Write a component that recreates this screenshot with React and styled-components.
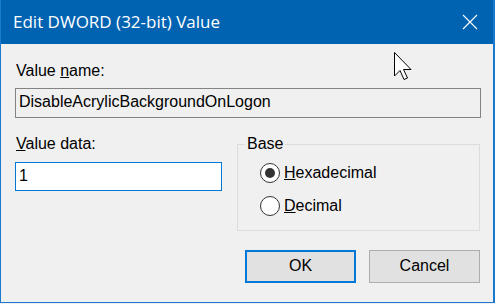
import React from "react";
import styled, { createGlobalStyle } from "styled-components";

const Global = createGlobalStyle`
  html, body { margin: 0; padding: 0; background: #f0f0f0; }
  body { font-family: "Liberation Sans", Arial, sans-serif; }
  * { box-sizing: border-box; }
`;

const Window = styled.div`
  position: relative;
  width: 495px;
  height: 303px;
  background: #f0f0f0;
  border-left: 1px solid #1a78cf;
  border-right: 2px solid #1a78cf;
  border-bottom: 1px solid #1a78cf;
  display: flex;
  flex-direction: column;
  overflow: hidden;
`;

const TitleBar = styled.div`
  height: 44px;
  flex: none;
  background: #0063b1;
  display: flex;
  align-items: center;
  justify-content: space-between;
  padding-left: 12px;
`;

const Title = styled.div`
  color: #fff;
  font-family: "Open Sans", "Noto Sans", sans-serif;
  font-size: 17px;
  line-height: 20px;
`;

const CloseButton = styled.div`
  width: 46px;
  height: 44px;
  display: flex;
  align-items: center;
  justify-content: center;
`;

const Body = styled.div`
  flex: 1;
  display: flex;
  flex-direction: column;
  padding: 18px 12px 0 14px;
  font-size: 16px;
  line-height: 18px;
  color: #000;
`;

const Label = styled.div`
  padding-left: 1px;
  height: 18px;
`;

const ReadOnlyBox = styled.div`
  margin-top: 8px;
  height: 30px;
  border: 1px solid #838383;
  background: #f0f0f0;
  padding: 0 0 2px 3px;
  display: flex;
  align-items: center;
`;

const Lower = styled.div`
  margin-top: 17px;
  display: grid;
  grid-template-columns: 207px 243px;
  column-gap: 15px;
  align-items: start;
`;

const LeftCol = styled.div`
  display: flex;
  flex-direction: column;
`;

const InputBox = styled.div`
  margin-top: 9px;
  height: 29px;
  border: 1px solid #0078d7;
  background: #fff;
  padding: 0 0 2px 3px;
  display: flex;
  align-items: center;
`;

const Group = styled.fieldset`
  margin: 0;
  padding: 3px 0 6px 22px;
  border: 1px solid #dcdcdc;
  min-inline-size: 0;
  height: 96px;
  display: flex;
  flex-direction: column;
`;

const Legend = styled.legend`
  padding: 0 2px;
  margin-left: -15px;
  line-height: 18px;
`;

const RadioRow = styled.label`
  height: 33px;
  display: flex;
  align-items: center;
  gap: 4px;
`;

const RadioCircle = styled.span`
  width: 20px;
  height: 20px;
  border-radius: 50%;
  border: 1.5px solid #333;
  background: #fff;
  display: flex;
  align-items: center;
  justify-content: center;
  &::after {
    content: "";
    width: 10px;
    height: 10px;
    border-radius: 50%;
    background: ${(p) => (p.$checked ? "#333" : "transparent")};
  }
`;

const Buttons = styled.div`
  margin-top: 19px;
  display: flex;
  justify-content: flex-end;
  gap: 13px;
  padding-right: 1px;
`;

const Button = styled.div`
  width: 111px;
  height: 33px;
  background: #e1e1e1;
  border: ${(p) => (p.$default ? "2px solid #0078d7" : "1px solid #adadad")};
  display: flex;
  align-items: center;
  justify-content: center;
  padding-bottom: 1px;
`;

const Cursor = styled.svg`
  position: absolute;
  left: 393px;
  top: 52px;
`;

export default function App() {
  return (
    <>
      <Global />
      <Window>
        <TitleBar>
          <Title>Edit DWORD (32-bit) Value</Title>
          <CloseButton>
            <svg width="16" height="16" viewBox="0 0 16 16">
              <path d="M1 1 L15 15 M15 1 L1 15" stroke="#fff" strokeWidth="1.1" />
            </svg>
          </CloseButton>
        </TitleBar>
        <Body>
          <Label>
            Value <u>n</u>ame:
          </Label>
          <ReadOnlyBox>DisableAcrylicBackgroundOnLogon</ReadOnlyBox>
          <Lower>
            <LeftCol>
              <Label>
                <u>V</u>alue data:
              </Label>
              <InputBox>1</InputBox>
            </LeftCol>
            <Group>
              <Legend>Base</Legend>
              <RadioRow>
                <RadioCircle $checked />
                <span>
                  <u>H</u>exadecimal
                </span>
              </RadioRow>
              <RadioRow>
                <RadioCircle />
                <span>
                  <u>D</u>ecimal
                </span>
              </RadioRow>
            </Group>
          </Lower>
          <Buttons>
            <Button $default>OK</Button>
            <Button>Cancel</Button>
          </Buttons>
        </Body>
        <Cursor width="19" height="29" viewBox="0 0 19 29">
          <path
            d="M0.5 0.5 L0.5 24 L6 18.5 L10 27.5 L13.5 26 L9.5 17.5 L17 17.5 Z"
            fill="#fff"
            stroke="#000"
            strokeWidth="1"
            strokeLinejoin="miter"
          />
        </Cursor>
      </Window>
    </>
  );
}
